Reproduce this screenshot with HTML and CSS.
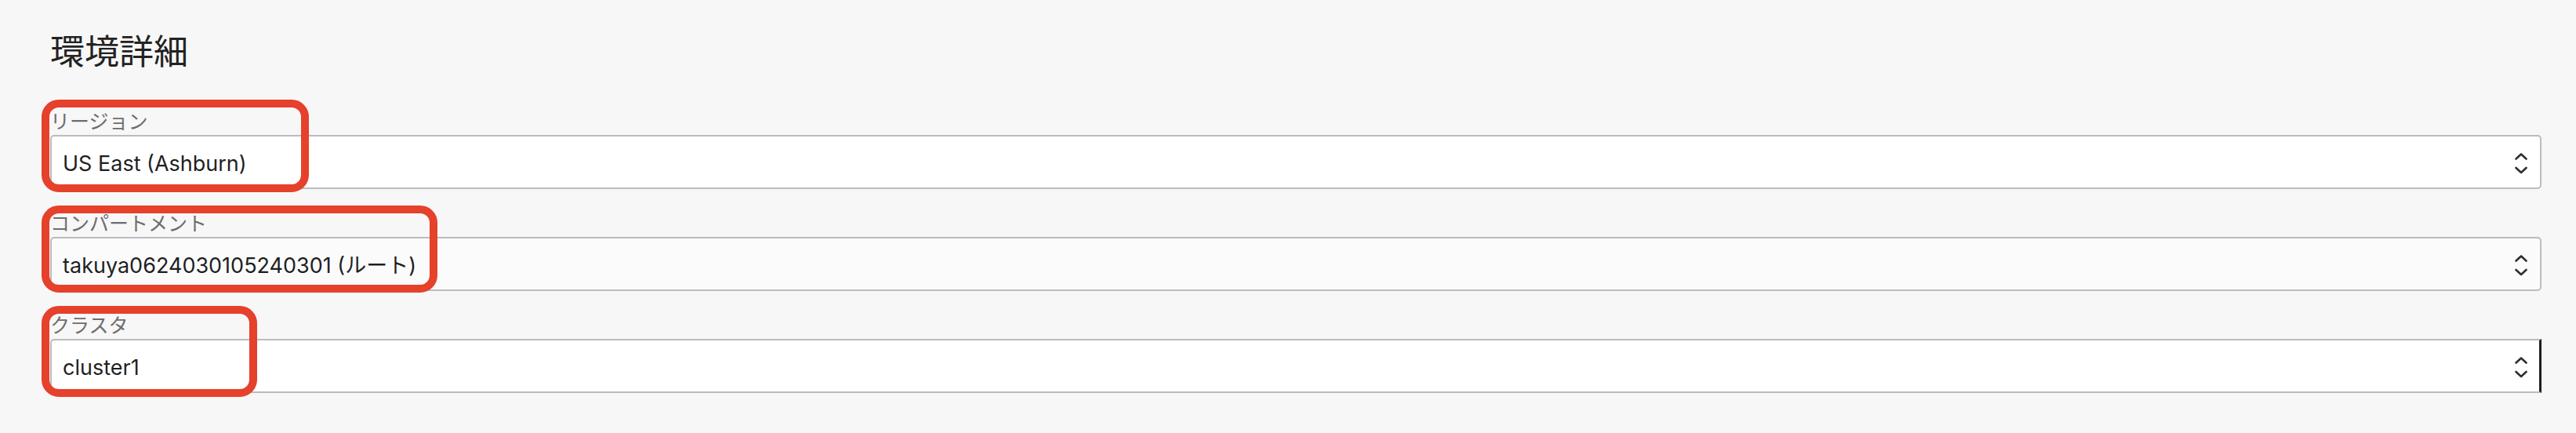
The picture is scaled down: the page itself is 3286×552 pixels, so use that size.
FILE: index.html
```html
<!DOCTYPE html>
<html lang="ja">
<head>
<meta charset="utf-8">
<title>環境詳細</title>
<link rel="stylesheet" href="styles.css">
</head>
<body>
<main class="page">
  <h2 class="title">環境詳細</h2>
  <div class="fields">
    <div class="field">
      <label class="field-label">リージョン</label>
      <div class="select">
        <span class="value">US East (Ashburn)</span>
        <svg class="chev" viewBox="0 0 16 29" width="16" height="29"><path d="M1.5 8.5 L8 2.5 L14.5 8.5 M1.5 20 L8 26 L14.5 20"/></svg>
      </div>
    </div>
    <div class="field">
      <label class="field-label">コンパートメント</label>
      <div class="select select-muted">
        <span class="value">takuya0624030105240301 (ルート)</span>
        <svg class="chev" viewBox="0 0 16 29" width="16" height="29"><path d="M1.5 8.5 L8 2.5 L14.5 8.5 M1.5 20 L8 26 L14.5 20"/></svg>
      </div>
    </div>
    <div class="field">
      <label class="field-label">クラスタ</label>
      <div class="select select-focus">
        <span class="value">cluster1</span>
        <svg class="chev" viewBox="0 0 16 29" width="16" height="29"><path d="M1.5 8.5 L8 2.5 L14.5 8.5 M1.5 20 L8 26 L14.5 20"/></svg>
      </div>
    </div>
  </div>
  <span class="callout callout-1"></span>
  <span class="callout callout-2"></span>
  <span class="callout callout-3"></span>
</main>
</body>
</html>
```
FILE: styles.css
```css
html, body {
  margin: 0;
  padding: 0;
  background: #f7f7f7;
}
body {
  font-family: Inter, "Noto Sans CJK JP", sans-serif;
  color: #1f1f1f;
}
.page {
  position: relative;
  padding: 37px 44px 40px 64px;
}
.title {
  margin: 0 0 48px 0;
  font-family: "Noto Sans CJK JP", sans-serif;
  font-size: 44px;
  line-height: 53px;
  font-weight: 400;
  color: #222;
}
.fields {
  display: flex;
  flex-direction: column;
  gap: 27px;
}
.field {
  display: flex;
  flex-direction: column;
  gap: 4px;
}
.field-label {
  font-family: "Noto Sans CJK JP", sans-serif;
  font-size: 25px;
  line-height: 30px;
  color: #6d6d6d;
}
.select {
  box-sizing: border-box;
  height: 69px;
  background: #ffffff;
  border: 2px solid #b9bcc0;
  border-radius: 5px;
  display: flex;
  align-items: center;
  justify-content: space-between;
  padding: 4px 16px 0 14px;
}
.select-muted {
  background: #fbfbfb;
}
.select-focus {
  border-right: 3px solid #1e1e1e;
  border-radius: 5px 0 0 5px;
  padding-right: 15px;
}
.value {
  font-size: 27px;
  line-height: 34px;
  color: #1f1f1f;
  font-family: Inter, "Noto Sans CJK JP", sans-serif;
}
.chev {
  display: block;
  margin-top: 0;
}
.chev path {
  fill: none;
  stroke: #2f2f2f;
  stroke-width: 2.6;
  stroke-linecap: round;
  stroke-linejoin: round;
}
.callout {
  position: absolute;
  box-sizing: border-box;
  border: 10px solid #e5412b;
  border-radius: 22px;
  pointer-events: none;
}
.callout-1 {
  left: 53px;
  top: 127px;
  width: 341px;
  height: 118px;
}
.callout-2 {
  left: 53px;
  top: 262px;
  width: 505px;
  height: 111px;
}
.callout-3 {
  left: 53px;
  top: 390px;
  width: 275px;
  height: 116px;
}
```
